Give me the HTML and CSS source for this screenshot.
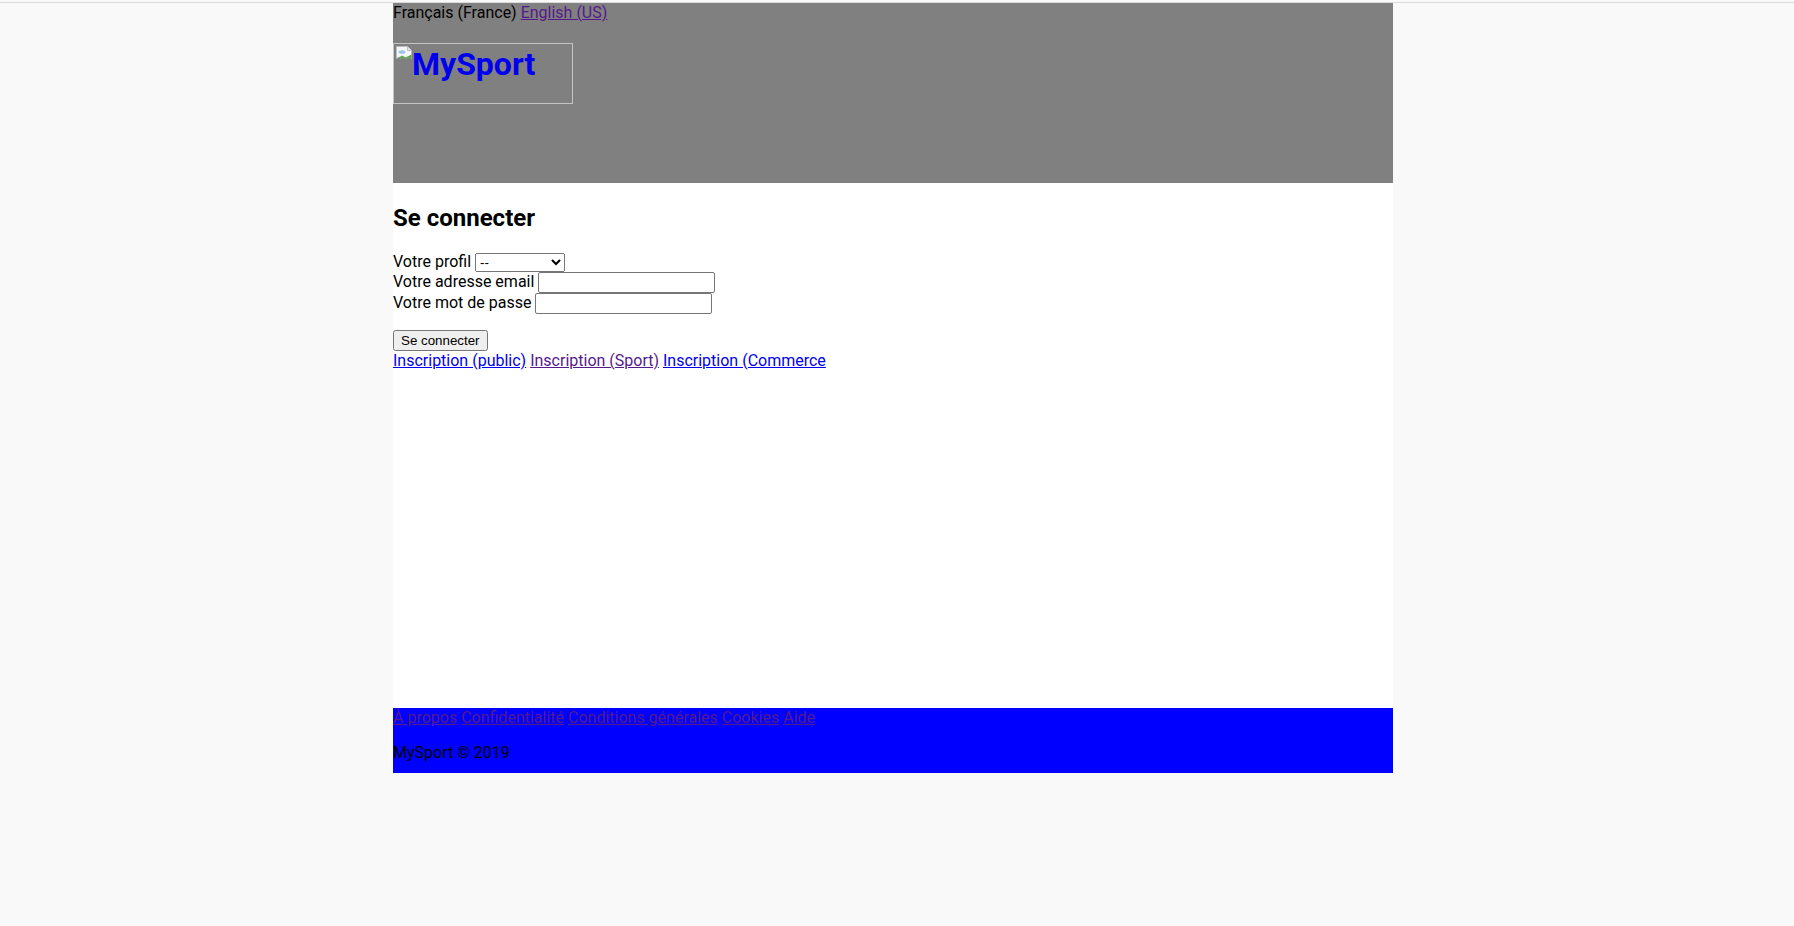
FILE: index.html
```html
<!DOCTYPE html>
<html lang="fr">
<head>
<meta charset="utf-8">
<title>MySport - Se connecter</title>
<link rel="stylesheet" href="styles.css">
</head>
<body>
<div class="page">
  <header class="site-header">
    <div class="langs">Français (France) <a href="#" class="visited">English (US)</a></div>
    <h1 class="logo-title"><a href="#" class="logo-link"><span class="logo-img"><svg class="broken-icon" width="16" height="16" viewBox="0 0 16 16"><path d="M0.5 0.5h11l4 4v8l-2.5-1.5-2.5 1.5-2.5-1.5-2.5 1.5-2.5-1.5-2.5 1.5z" fill="#f4f6f8" stroke="#b8bcc2"/><path d="M11.5 0.5v4h4" fill="#e4e8ec" stroke="#b8bcc2"/><ellipse cx="6" cy="6" rx="3.5" ry="1.8" fill="#9ec3ea"/><path d="M1 13l5-3.5 3.5 2 6-3v4.5l-2.5-1.5-2.5 1.5-2.5-1.5-2.5 1.5-2.5-1.5z" fill="#5aa74a"/></svg><span class="logo-alt">MySport</span></span></a></h1>
  </header>
  <main class="content">
    <h2 class="title">Se connecter</h2>
    <form class="login-form">
      <div class="row"><label>Votre profil</label> <select class="profile"><option>--</option><option>Public</option><option>Sport</option><option>Commerce</option></select></div>
      <div class="row"><label>Votre adresse email</label> <input type="text" class="field"></div>
      <div class="row"><label>Votre mot de passe</label> <input type="password" class="field"></div>
      <div class="submit-row"><button type="button" class="btn">Se connecter</button></div>
    </form>
    <div class="signup-links"><a href="#">Inscription (public)</a> <a href="#" class="visited">Inscription (Sport)</a> <a href="#">Inscription (Commerce</a></div>
  </main>
  <footer class="site-footer">
    <nav class="footer-links"><a href="#" class="visited">À propos</a> <a href="#" class="visited">Confidentialité</a> <a href="#" class="visited">Conditions générales</a> <a href="#" class="visited">Cookies</a> <a href="#" class="visited">Aide</a></nav>
    <p class="copyright">MySport © 2019</p>
  </footer>
</div>
</body>
</html>
```

FILE: styles.css
```css
html {
  background: #f9f9f9;
}
body {
  margin: 2px 0 0;
  padding-right: 8px;
  border-top: 1px solid #dcdcdc;
  font-family: Roboto, "Liberation Sans", sans-serif;
  font-size: 16px;
  color: #000;
}
a {
  color: #0000ee;
}
a.visited {
  color: #551a8b;
}
.page {
  width: 1000px;
  margin: 0 auto;
  background: #fff;
}
.site-header {
  height: 180px;
  background: #808080;
}
.langs {
  line-height: normal;
}
.logo-title {
  font-size: 32px;
  font-weight: bold;
  margin: 21px 0;
}
.logo-link {
  text-decoration: none;
  color: #0000ee;
}
.logo-img {
  display: inline-flex;
  align-items: flex-start;
  vertical-align: top;
  box-sizing: border-box;
  width: 180px;
  height: 61px;
  border: 1px solid #c4c4c4;
  padding: 2px 0 0 2px;
  overflow: hidden;
}
.broken-icon {
  flex: none;
}
.logo-alt {
  margin-top: 0;
  line-height: 37px;
}
.content {
  min-height: 525px;
  box-sizing: border-box;
  padding-top: 0.1px;
}
.title {
  font-size: 24px;
  font-weight: bold;
  margin: 21px 0 20px;
}
.login-form {
  margin: 0;
}
.profile {
  font-family: "Liberation Sans", Arial, sans-serif;
  font-size: 13.33px;
  width: 90px;
  height: 19px;
}
.field {
  font-family: "Liberation Sans", Arial, sans-serif;
  font-size: 13.33px;
  width: 177px;
  height: 21px;
  box-sizing: border-box;
  border: 1px solid #767676;
  border-radius: 2px;
  padding: 1px 2px;
}
.submit-row {
  margin-top: 16px;
}
.btn {
  font-family: "Liberation Sans", Arial, sans-serif;
  font-size: 13.33px;
  height: 21px;
  padding: 1px 6px;
}
.site-footer {
  background: #0000ff;
  height: 65px;
}
.copyright {
  margin: 16px 0 0;
}
```
